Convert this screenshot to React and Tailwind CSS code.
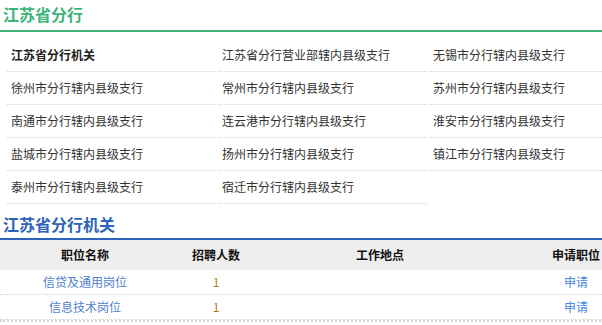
import React from "react";

const branches = [
  "江苏省分行机关",
  "江苏省分行营业部辖内县级支行",
  "无锡市分行辖内县级支行",
  "徐州市分行辖内县级支行",
  "常州市分行辖内县级支行",
  "苏州市分行辖内县级支行",
  "南通市分行辖内县级支行",
  "连云港市分行辖内县级支行",
  "淮安市分行辖内县级支行",
  "盐城市分行辖内县级支行",
  "扬州市分行辖内县级支行",
  "镇江市分行辖内县级支行",
  "泰州市分行辖内县级支行",
  "宿迁市分行辖内县级支行",
];

const jobs = [
  { name: "信贷及通用岗位", count: "1" },
  { name: "信息技术岗位", count: "1" },
];

export default function App() {
  return (
    <div
      className="w-[602px] h-[325px] overflow-hidden bg-white text-[12px] text-[#333]"
      style={{ fontFamily: '"Microsoft YaHei", "Noto Sans CJK SC", "Noto Sans", sans-serif' }}
    >
      <div className="h-[30px] pl-[3px] pt-[3px] text-[16px] font-bold leading-[22px] text-[#3db47a]">
        江苏省分行
      </div>
      <div className="h-[2px] bg-[#41b47c]" />

      <div className="ml-[7px] mt-[7px] grid w-[640px] grid-cols-[211px_211px_211px]">
        {branches.map((b, i) => (
          <div
            key={b}
            className={`mr-[2px] h-[33px] border-b border-dotted border-[#d2d2d2] pl-[4px] flex items-center ${
              i === 0 ? "font-bold text-[#222]" : "text-[#333]"
            }`}
          >
            {b}
          </div>
        ))}
      </div>

      <div className="h-[34px] pl-[3px] pt-[9px] text-[16px] font-bold leading-[22px] text-[#2d63b9]">
        江苏省分行机关
      </div>
      <div className="h-[2px] bg-[#2d63b9]" />

      <div className="w-[656px]">
        <div className="flex h-[30px] items-center bg-[#eeeeee] font-bold text-[#111]">
          <div className="w-[170px] text-center">职位名称</div>
          <div className="w-[92px] text-center">招聘人数</div>
          <div className="w-[236px] text-center">工作地点</div>
          <div className="w-[156px] text-center">申请职位</div>
        </div>
        {jobs.map((j) => (
          <div
            key={j.name}
            className="flex h-[25px] items-center border-b border-dotted border-[#d2d2d2]"
          >
            <div className="w-[170px] text-center text-[#4f7fce]">{j.name}</div>
            <div className="w-[92px] text-center text-[#b8771e]">{j.count}</div>
            <div className="w-[236px] text-center"></div>
            <div className="w-[156px] text-center text-[#4a87df]">申请</div>
          </div>
        ))}
        <div className="h-[2px] border-b-2 border-dotted border-[#d6d6d6]" />
      </div>
    </div>
  );
}
